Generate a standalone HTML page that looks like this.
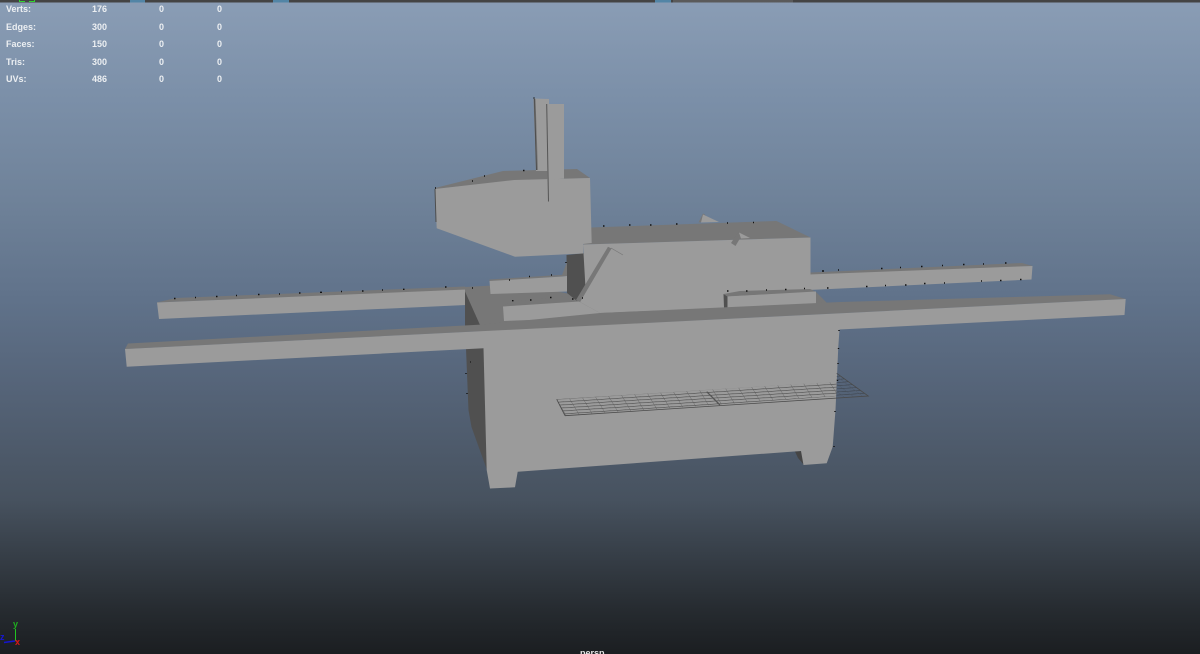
<!DOCTYPE html>
<html>
<head>
<meta charset="utf-8">
<style>
html,body{margin:0;padding:0;width:1200px;height:654px;overflow:hidden;background:#1b1e21}
#v{position:relative;width:1200px;height:654px;overflow:hidden;background:linear-gradient(to bottom,#8a9db5 0,#7b8fa8 100px,#6f8299 200px,#60728a 300px,#56657a 380px,#47525f 500px,#262b30 610px,#1b1e21 654px);font-family:"Liberation Sans",sans-serif;}
svg{position:absolute;left:0;top:0;filter:blur(.35px)}
.t{position:absolute;font-size:9px;font-weight:bold;color:#eceff2;line-height:10px;white-space:nowrap;filter:blur(.25px)}
</style>
</head>
<body>
<div id="v">
<svg width="1200" height="654" viewBox="0 0 1200 654">
<defs>
<pattern id="g" width="13" height="2.9" patternUnits="userSpaceOnUse" patternTransform="matrix(1 -0.065 0.6 1 556 399)">
<path d="M0 0H13" stroke="#484848" stroke-width="1.1" fill="none"/>
<path d="M0 0V2.9" stroke="#5a5a5a" stroke-width="0.8" fill="none"/>
</pattern>
<pattern id="g2" width="9" height="2.9" patternUnits="userSpaceOnUse" patternTransform="matrix(1 -0.065 1.3 1 836 376)">
<path d="M0 0H9" stroke="#3f4650" stroke-width="1.1" fill="none"/>
<path d="M0 0V2.9" stroke="#4a525d" stroke-width="0.8" fill="none"/>
</pattern>
</defs>
<!-- top bar -->
<rect x="0" y="0" width="1200" height="2.5" fill="#444"/>
<rect x="130" y="0" width="15" height="2.5" fill="#5285a6"/>
<rect x="273" y="0" width="16" height="2.5" fill="#5285a6"/>
<rect x="655" y="0" width="16" height="2.5" fill="#5285a6"/>
<rect x="673" y="0" width="120" height="2.5" fill="#5a5a5a"/>
<path d="M19.5 0V1.5H25M29 1.5H34.5V0" stroke="#2fd52f" fill="none"/>

<!-- back rail left -->
<polygon points="156.5,302.5 176,298 465,286.5 467,290" fill="#777"/>
<polygon points="157,302.5 466,289.5 466,305 159,319" fill="#9b9b9b"/>
<!-- back rail right -->
<polygon points="810,272.5 1022,263 1032.5,266 810,275" fill="#777"/>
<polygon points="809,274.5 1032.5,266 1031.5,279.5 809,290" fill="#9b9b9b"/>

<!-- deck -->
<polygon points="465,287 520,284 600,300 816,296 816,314 480,332 465,326" fill="#777"/>
<polygon points="465,291.5 480,325 465,326" fill="#505050"/>
<polygon points="810,289 816,292 832,308 800,314" fill="#777"/>

<!-- dark wall behind -->
<polygon points="566.5,255 586,253 586,288 577,301 567,293" fill="#505050"/>

<!-- machine upper body -->
<polygon points="591.5,227.5 776.5,221 810.5,237.5 583.5,244.5" fill="#777"/>
<polygon points="583,244.5 810.5,237.5 810.5,290 800,305 600,313 580,302 585.5,288" fill="#9b9b9b"/>
<!-- notch bits -->
<polygon points="698.5,222.5 703,213.5 705.5,215 702,222" fill="#777"/>
<polygon points="703,214.5 719,222 701,222.5" fill="#9b9b9b"/>
<polygon points="731,243 738,232.5 742,235 735.5,246" fill="#777"/>
<polygon points="739,232.5 750,238 741,238.5" fill="#9b9b9b"/>
<!-- diagonal strip -->
<polygon points="608,246.7 611.5,248.5 580,302.3 576,300" fill="#777"/>
<path d="M611 248L623 255" stroke="#777" stroke-width="0.7"/>

<!-- left inner block -->
<polygon points="489.5,279.5 551,275.5 562,275 567,262 567,276 489.5,281.5" fill="#777"/>
<polygon points="489.5,281 562.5,276.5 567,276 567,291.5 490.5,294" fill="#9b9b9b"/>

<!-- low front block -->
<polygon points="503,306 511.5,301.5 568,296 577,301.5 503,307" fill="#777"/>
<polygon points="503,306.5 579,301.5 600,313 583,318 504,321" fill="#9b9b9b"/>

<!-- right small block -->
<polygon points="723.5,294 740,291 810,289 816,292 727.5,296.5" fill="#777"/>
<polygon points="723.5,294 727.5,296.5 727.5,310 724,307.5" fill="#505050"/>
<polygon points="727.5,296.5 816,291.5 816,306.5 727.5,310.5" fill="#9b9b9b"/>

<!-- main rail -->
<polygon points="125,349 128,343.5 483,324.5 600,313 840,302 1110,294.3 1125.7,299" fill="#777"/>
<!-- body side dark -->
<polygon points="466,348.5 484,348 487,470 471.5,427 468.5,410" fill="#505050"/>
<!-- right leg dark -->
<polygon points="795,451.5 802,451 804,465 798,458" fill="#454545"/>
<!-- rail face + body -->
<polygon points="125,349 1125.7,299 1124.5,315 839.5,329.5 838.3,346.7 835.5,410 832.7,446.7 826.7,463.3 803.5,465 801,451 517.7,471.7 515,487.3 490,488.5 486.7,470 483.5,348.3 126.7,366.7" fill="#9b9b9b"/>

<!-- head -->
<polygon points="435,188 503,171 577,169 590,178 514,180.5 435,189" fill="#777"/>
<polygon points="533.5,98.5 549,99 549,171 536,171" fill="#9b9b9b"/>
<polygon points="533.5,98.5 535.5,99 538,170 536,170" fill="#777"/>
<polygon points="435,189 514,180 590,178 591.7,243 583,244 583,253.5 515,256.7 436.7,228.3" fill="#9b9b9b"/>
<polygon points="546.5,104 564,104 564,178.5 549.5,180 549,201.5 547.5,201" fill="#9b9b9b"/>
<path d="M546.7 104L548.5 201.5" stroke="#555" stroke-width="1" fill="none"/>
<path d="M534.5 99L536.5 170M435 189L436 222" stroke="#4e4e4e" stroke-width="1" fill="none"/>

<!-- grid -->
<polygon points="556.7,399.3 836.7,381.7 836.7,396 565,415.7" fill="url(#g)"/>
<polygon points="836.7,373.3 868.3,396 836.7,398" fill="url(#g2)"/>
<path d="M565 415.7L868.3 396L836.7 373.3M556.7 399.3L565 415.7" stroke="#4a4a4a" stroke-width="0.8" fill="none"/>
<path d="M706.7 391.7L720 405" stroke="#555" stroke-width="1.3" fill="none"/>

<!-- vertices -->
<path stroke="#111" stroke-width="1.4" fill="none" d="M174 298.5h1.5M195 297.5h1M216 296.5h1.5M236 295.5h1M258 294.5h1.5M279 294h1M299 293h1.5M320 292.3h2M341 291.5h1M362 291h1.5M382 290h1M403 289.3h1.5M445 287h1.5M512 300.7h1.5M530 300h1.5M550 297.5h1.5M509 280h1M529 276.5h1M551 275h1M472 288h1M470 362h0.7M466 373v1M467 393v1M822 271h2M838 270h1M881 268.5h1.5M900 267.5h1M921 266.5h1.5M942 265.5h1M963 264.5h1.5M983 264h1M1005 263h1.5M866 286.5h1.5M885 285.5h1M905 285h1.5M924 283.5h1.5M944 283h1M981 281h1M1000 280.5h1.5M1020 279.5h1.5M804 288.5h1M827 288h1.5M839 330v1M838.5 348v1M838 363v1M837.5 380v1M835 411v1M834 446v1M603 226h1.5M629 225h1.5M650 225h1.5M676 224h1.5M727 223h1M753 222.5h1M727 291h1.5M746 291h1.5M766 290h1M785 289.5h1.5M533.5 98h1M472 181h1M484 176h1M523 170.5h1.5M435 188h1M566 262v1M582 298h1M572 299h1.5"/>

<!-- axis -->
<path d="M15.5 629V641" stroke="#21c321" stroke-width="1"/>
<path d="M4 642.5L15 641" stroke="#1515d0" stroke-width="1.4"/>
<path d="M15.5 641h2" stroke="#d01515" stroke-width="1.2"/>
</svg>

<div class="t" style="left:6px;top:4px">Verts:</div>
<div class="t" style="left:6px;top:22px">Edges:</div>
<div class="t" style="left:6px;top:39px">Faces:</div>
<div class="t" style="left:6px;top:57px">Tris:</div>
<div class="t" style="left:6px;top:74px">UVs:</div>

<div class="t" style="left:92px;top:4px">176</div>
<div class="t" style="left:92px;top:22px">300</div>
<div class="t" style="left:92px;top:39px">150</div>
<div class="t" style="left:92px;top:57px">300</div>
<div class="t" style="left:92px;top:74px">486</div>

<div class="t" style="left:159px;top:4px">0</div>
<div class="t" style="left:159px;top:22px">0</div>
<div class="t" style="left:159px;top:39px">0</div>
<div class="t" style="left:159px;top:57px">0</div>
<div class="t" style="left:159px;top:74px">0</div>

<div class="t" style="left:217px;top:4px">0</div>
<div class="t" style="left:217px;top:22px">0</div>
<div class="t" style="left:217px;top:39px">0</div>
<div class="t" style="left:217px;top:57px">0</div>
<div class="t" style="left:217px;top:74px">0</div>

<div class="t" style="left:13px;top:619px;color:#1fae1f">y</div>
<div class="t" style="left:0px;top:632px;color:#1717d8">z</div>
<div class="t" style="left:15px;top:637px;color:#d81717">x</div>
<div class="t" style="left:580px;top:648px;color:#e4e4e4">persp</div>
</div>
</body>
</html>
